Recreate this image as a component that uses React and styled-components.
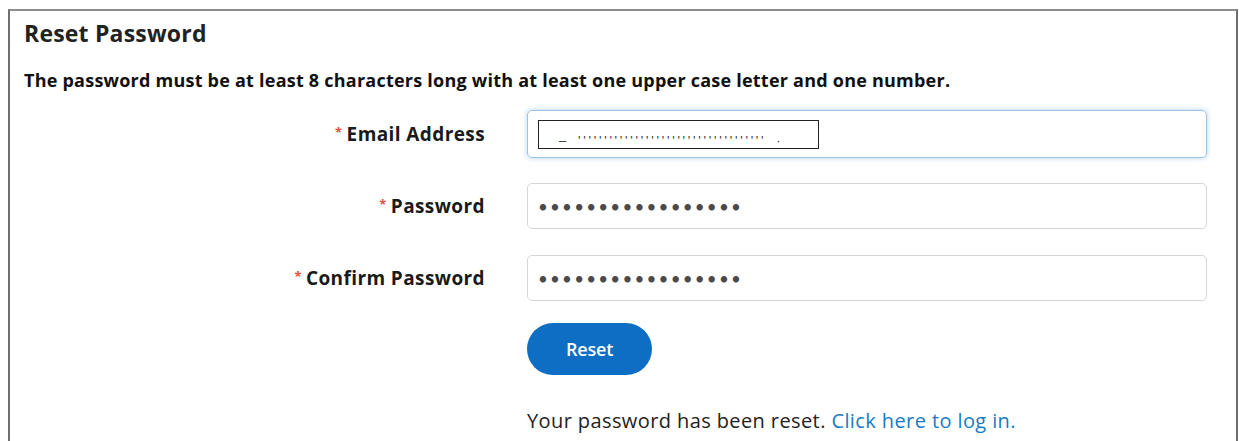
import styled, { createGlobalStyle } from "styled-components";

const GlobalStyle = createGlobalStyle`
    body{
        margin: 0;
        background: #FFF;
        font-family: "Open Sans", "Liberation Sans", sans-serif;
    }
`;

const fields = [
    { id: "email", label: "Email Address", focused: true },
    { id: "password", label: "Password", value: "•••••••••••••••••" },
    { id: "confirm", label: "Confirm Password", value: "•••••••••••••••••" },
];

export default function App(){
    return(
        <>
            <GlobalStyle />
            <Panel>
                <Title>Reset Password</Title>
                <Rules>The password must be at least 8 characters long with at least one upper case letter and one number.</Rules>
                <Form onSubmit={e => e.preventDefault()}>
                    {fields.map(f => (
                        <Row key={f.id}>
                            <Label htmlFor={f.id}><span>*</span>{f.label}</Label>
                            <Field focused={f.focused}>
                                {f.id === "email"
                                    ? <Masked><b>–</b>{"'".repeat(36)}<b>·</b></Masked>
                                    : <Dots>{f.value}</Dots>}
                            </Field>
                        </Row>
                    ))}
                    <Actions>
                        <Button type="submit">Reset</Button>
                        <Message>Your password has been reset. <a href="#login">Click here to log in.</a></Message>
                    </Actions>
                </Form>
            </Panel>
        </>
    );
}

const Panel = styled.div`
    margin: 9px 1px 0 8px;
    height: 440px;
    border: 2px solid #6e6e6e;
    border-bottom: none;
    border-top-color: #8c8c8c;
    padding: 7px 0 0 14px;
    box-sizing: border-box;
    overflow: hidden;
`;

const Title = styled.h1`
    margin: 0;
    font-size: 23px;
    font-weight: 700;
    color: #222;
    line-height: 30px;
    letter-spacing: 0.2px;
`;

const Rules = styled.p`
    margin: 20px 0 0 0;
    font-size: 18px;
    font-weight: 700;
    color: #111;
    line-height: 24px;
    letter-spacing: 0.23px;
`;

const Form = styled.form`
    display: flex;
    flex-direction: column;
    gap: 24px;
    margin-top: 18px;
`;

const Row = styled.div`
    display: grid;
    grid-template-columns: 461px 680px;
    column-gap: 42px;
    align-items: center;
    height: 48px;
`;

const Label = styled.label`
    justify-self: end;
    font-size: 19px;
    font-weight: 700;
    color: #1a1a1a;
    letter-spacing: 0.4px;

    span{
        color: #e0503c;
        font-size: 13px;
        margin-right: 4px;
        vertical-align: 4px;
    }
`;

const Field = styled.div`
    box-sizing: border-box;
    border-radius: 5px;
    display: flex;
    align-items: center;
    padding-left: 10px;
    border: 1px solid ${p => p.focused ? "#9cc4e4" : "#d6d6d6"};
    box-shadow: ${p => p.focused ? "0 0 4px 1px rgba(130, 185, 230, 0.45)" : "none"};
    height: ${p => p.focused ? "48px" : "46px"};
`;

/* scrambled address, drawn as ticks in a boxed strip */
const Masked = styled.div`
    width: 281px;
    height: 29px;
    box-sizing: border-box;
    border: 1.5px solid #222;
    font: 13px "Liberation Sans", sans-serif;
    color: #3a3a3a;
    padding: 15px 0 0 20px;
    line-height: 10px;
    letter-spacing: 2.75px;
    white-space: nowrap;
    overflow: hidden;

    b{
        font-weight: 400;
        margin: 0 9px 0 0;
    }

    b:last-child{
        margin: 0 0 0 10px;
    }
`;

const Dots = styled.span`
    font: 17px "Lato", sans-serif;
    color: #4a4a4a;
    letter-spacing: 2.2px;
`;

const Actions = styled.div`
    display: flex;
    flex-direction: column;
    align-items: flex-start;
    margin: -3px 0 0 503px;
`;

const Button = styled.button`
    width: 125px;
    height: 52px;
    border: none;
    border-radius: 26px;
    background: #0e6ec3;
    color: #FFF;
    font: 600 18px "Open Sans", sans-serif;
    letter-spacing: -0.2px;
    cursor: pointer;
`;

const Message = styled.p`
    margin: 32px 0 0 0;
    font-size: 20px;
    line-height: 27px;
    color: #222;
    letter-spacing: 0.4px;

    a{
        color: #1b7bbf;
        text-decoration: none;
    }
`;
